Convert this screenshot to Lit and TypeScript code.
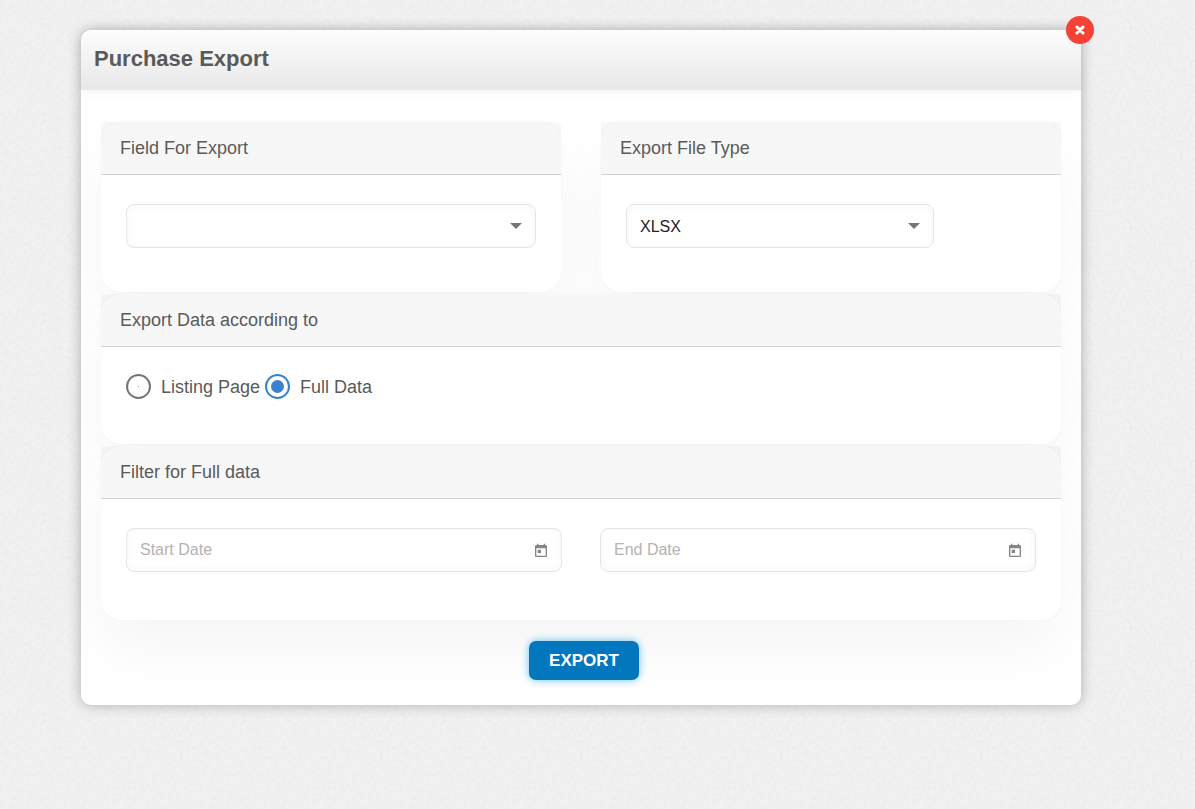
import { LitElement, html, css, svg } from "lit";
import { customElement, property, state } from "lit/decorators.js";

@customElement("export-card")
class ExportCard extends LitElement {
  @property() heading = "";
  @property({ type: Boolean, reflect: true }) compact = false;

  static styles = css`
    :host {
      display: block;
      border-radius: 20px;
      background: #fff;
      box-shadow: 0 30px 60px rgba(0, 0, 0, 0.04), 0 0 2px rgba(0, 0, 0, 0.05);
    }
    .heading {
      margin: 0;
      padding: 16px 19px;
      border-bottom: 1px solid #d3d3d3;
      border-radius: 4px 4px 0 0;
      background: rgba(0, 0, 0, 0.033);
      font-size: 18px;
      font-weight: 400;
      line-height: 20px;
    }
    .body {
      padding: 29px 25px 44px;
    }
    :host([compact]) .body {
      padding: 27px 25px 45px;
    }
  `;

  render() {
    return html`
      <h2 class="heading">${this.heading}</h2>
      <div class="body"><slot></slot></div>
    `;
  }
}

@customElement("app-root")
class AppRoot extends LitElement {
  @state() private source = "full";

  static styles = css`
    :host {
      display: block;
      box-sizing: border-box;
      min-height: 100vh;
      padding: 30px 33px 30px 0;
      background-color: #f2f2f2;
      background-image: url("data:image/svg+xml,%3Csvg xmlns='http://www.w3.org/2000/svg' width='200' height='200'%3E%3Cfilter id='n' x='0' y='0' width='100%25' height='100%25'%3E%3CfeTurbulence type='fractalNoise' baseFrequency='.3' numOctaves='2' stitchTiles='stitch'/%3E%3CfeColorMatrix values='0 0 0 0 0 0 0 0 0 0 0 0 0 0 0 .04 0 0 0 -.012'/%3E%3C/filter%3E%3Crect width='200' height='200' filter='url(%23n)'/%3E%3C/svg%3E");
      color: #5a5a5a;
      font-family: "Liberation Sans", Arial, sans-serif;
    }
    *,
    *::before {
      box-sizing: border-box;
    }
    .dialog {
      position: relative;
      max-width: 1000px;
      margin: 0 auto;
      border-radius: 10px;
      background: #fff;
      box-shadow: 0 0 14px rgba(0, 0, 0, 0.28);
    }
    .title-bar {
      padding: 15px 13px 17px;
      border-radius: 10px 10px 0 0;
      background: linear-gradient(#fdfdfd, #e8e8e8);
      box-shadow: 0 2px 10px rgba(0, 0, 0, 0.05);
    }
    .title {
      margin: 0;
      font-size: 22px;
      font-weight: 700;
      line-height: 28px;
    }
    .close {
      position: absolute;
      top: -14px;
      right: -13px;
      display: grid;
      place-items: center;
      width: 28px;
      height: 28px;
      padding: 0;
      border: 0;
      border-radius: 50%;
      background: #f44336;
      color: #fff;
      cursor: pointer;
    }
    .content {
      display: grid;
      gap: 2px;
      padding: 32px 20px 0;
    }
    .pair {
      display: grid;
      grid-template-columns: 1fr 1fr;
      gap: 40px;
    }
    .field {
      position: relative;
      display: block;
    }
    .narrow {
      width: 75%;
    }
    .control {
      display: block;
      width: 100%;
      height: 44px;
      margin: 0;
      padding: 0 44px 0 13px;
      border: 1px solid #e5e5e5;
      border-radius: 8px;
      outline: 0;
      appearance: none;
      background: #fff;
      box-shadow: inset 0 0 8px rgba(0, 0, 0, 0.04);
      color: #222;
      font: 16px "Liberation Sans", Arial, sans-serif;
    }
    .control::placeholder {
      color: #b3b3b3;
      opacity: 1;
    }
    .arrow {
      position: absolute;
      top: 19px;
      right: 14px;
      pointer-events: none;
      color: #757575;
    }
    .calendar {
      position: absolute;
      top: 11px;
      right: 9px;
      display: grid;
      place-items: center;
      width: 24px;
      height: 24px;
      padding: 0;
      border: 0;
      background: none;
      color: #858585;
      cursor: pointer;
    }
    .radios {
      display: flex;
      flex-wrap: wrap;
      gap: 5px;
    }
    .radio {
      display: flex;
      align-items: center;
      gap: 10px;
      font-size: 18px;
      line-height: 20px;
      cursor: pointer;
    }
    .radio input {
      display: grid;
      place-items: center;
      width: 25px;
      height: 25px;
      margin: 0;
      border: 2px solid #757575;
      border-radius: 50%;
      appearance: none;
      background: #fff;
    }
    .radio input::before {
      content: "";
      width: 1px;
      height: 1px;
      border-radius: 50%;
      background: #757575;
    }
    .radio input:checked {
      border-color: #3a82c8;
    }
    .radio input:checked::before {
      width: 13px;
      height: 13px;
      background: #3a82d0;
    }
    .dates {
      display: grid;
      grid-template-columns: 1fr 1fr;
      gap: 38px;
      padding-bottom: 4px;
    }
    .actions {
      position: relative;
      display: flex;
      justify-content: center;
      padding: 21px 14px 25px 20px;
    }
    .export {
      height: 39px;
      padding: 0 20px;
      border: 0;
      border-radius: 7px;
      background: #0277bd;
      box-shadow: 0 0 8px rgba(3, 155, 229, 0.6);
      color: #fff;
      font: 700 17px "Liberation Sans", Arial, sans-serif;
      text-transform: uppercase;
      cursor: pointer;
    }
  `;

  private arrow() {
    return html`<svg class="arrow" width="12" height="6" viewBox="0 0 12 6" aria-hidden="true">
      ${svg`<path d="M0 0h12L6 6z" fill="currentColor"/>`}
    </svg>`;
  }

  private dateField(label: string) {
    return html`<div class="field">
      <input class="control" type="text" placeholder=${label} aria-label=${label} />
      <button class="calendar" type="button" aria-label=${`Choose ${label}`}>
        <svg width="16" height="16" viewBox="0 0 24 24" aria-hidden="true">
          <path
            fill="currentColor"
            d="M19 3h-1V1h-2v2H8V1H6v2H5c-1.11 0-2 .9-2 2v14c0 1.1.89 2 2 2h14c1.1 0 2-.9 2-2V5c0-1.1-.9-2-2-2zm0 16H5V8h14v11zM7 10h5v5H7z"
          />
        </svg>
      </button>
    </div>`;
  }

  private radio(value: string, label: string) {
    return html`<label class="radio">
      <input
        type="radio"
        name="source"
        .value=${value}
        .checked=${this.source === value}
        @change=${() => (this.source = value)}
      />${label}
    </label>`;
  }

  render() {
    return html`
      <main class="dialog" role="dialog" aria-labelledby="title">
        <header class="title-bar">
          <h1 class="title" id="title">Purchase Export</h1>
        </header>
        <button class="close" type="button" aria-label="Close">
          <svg width="10" height="10" viewBox="0 0 10 10" aria-hidden="true">
            <path d="M2 2l6 6M8 2l-6 6" stroke="currentColor" stroke-width="3" stroke-linecap="round" />
          </svg>
        </button>
        <div class="content">
          <div class="pair">
            <export-card heading="Field For Export">
              <div class="field">
                <select class="control" aria-label="Field For Export">
                  <option></option>
                </select>
                ${this.arrow()}
              </div>
            </export-card>
            <export-card heading="Export File Type">
              <div class="field narrow">
                <select class="control" aria-label="Export File Type">
                  <option>XLSX</option>
                </select>
                ${this.arrow()}
              </div>
            </export-card>
          </div>
          <export-card compact heading="Export Data according to">
            <div class="radios">
              ${this.radio("listing", "Listing Page")} ${this.radio("full", "Full Data")}
            </div>
          </export-card>
          <export-card heading="Filter for Full data">
            <div class="dates">${this.dateField("Start Date")} ${this.dateField("End Date")}</div>
          </export-card>
        </div>
        <footer class="actions">
          <button class="export" type="button">Export</button>
        </footer>
      </main>
    `;
  }
}
